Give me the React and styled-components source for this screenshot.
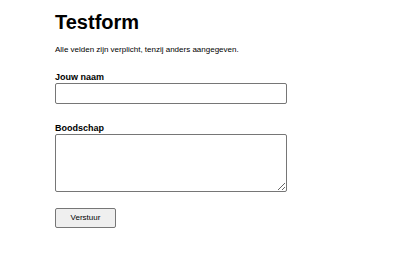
import styled, { createGlobalStyle } from 'styled-components';

const GlobalStyle = createGlobalStyle`
    body {
        margin: 0;
        background: #fff;
        font-family: "Liberation Sans", Arial, sans-serif;
        color: #000;
    }
`;

const Page = styled.div`
    padding: 10px 0 0 55px;
    width: 232px;
`;

const Title = styled.h1`
    font-size: 20px;
    font-weight: bold;
    margin: 0 0 11px;
    line-height: 24px;
`;

const Intro = styled.p`
    font-size: 8px;
    margin: 0 0 17px;
    line-height: 10px;
`;

const Field = styled.div`
    display: flex;
    flex-direction: column;
    gap: 1px;
    margin-bottom: ${(props) => props.$gap}px;
`;

const Label = styled.label`
    font-size: 9px;
    font-weight: bold;
    line-height: 10px;
`;

const Input = styled.input`
    box-sizing: border-box;
    width: 232px;
    height: 21px;
    border: 1px solid #767676;
    border-radius: 2px;
    margin: 0;
`;

const TextArea = styled.textarea`
    box-sizing: border-box;
    width: 232px;
    height: 58px;
    border: 1px solid #767676;
    border-radius: 2px;
    margin: 0;
`;

const Button = styled.button`
    box-sizing: border-box;
    width: 61px;
    height: 20px;
    font-family: "Liberation Sans", Arial, sans-serif;
    font-size: 8px;
    background: #efefef;
    border: 1px solid #767676;
    border-radius: 2px;
    color: #000;
    padding: 0;
`;

const App = () => {
    return (
        <>
            <GlobalStyle />
            <Page>
                <Title>Testform</Title>
                <Intro>Alle velden zijn verplicht, tenzij anders aangegeven.</Intro>
                <Field $gap={19}>
                    <Label>Jouw naam</Label>
                    <Input type="text" />
                </Field>
                <Field $gap={14}>
                    <Label>Boodschap</Label>
                    <TextArea />
                </Field>
                <Button>Verstuur</Button>
            </Page>
        </>
    );
};

export default App;
